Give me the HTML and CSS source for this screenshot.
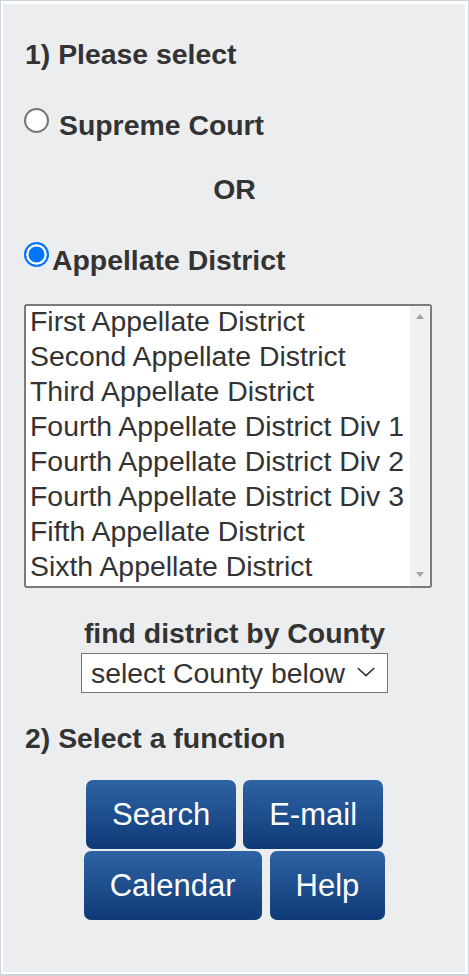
FILE: index.html
```html
<!DOCTYPE html>
<html lang="en">
<head>
<meta charset="utf-8">
<title>Select court</title>
<link rel="stylesheet" href="styles.css">
</head>
<body>
<div class="frame">
  <div class="panel">
    <p class="step">1) Please select</p>
    <div class="choice choice-supreme">
      <span class="radio"></span>
      <span>Supreme Court</span>
    </div>
    <p class="or">OR</p>
    <div class="choice choice-appellate">
      <span class="radio checked"></span>
      <span>Appellate District</span>
    </div>
    <div class="listbox">
      <div class="options">
        <div class="option">First Appellate District</div>
        <div class="option">Second Appellate District</div>
        <div class="option">Third Appellate District</div>
        <div class="option">Fourth Appellate District Div 1</div>
        <div class="option">Fourth Appellate District Div 2</div>
        <div class="option">Fourth Appellate District Div 3</div>
        <div class="option">Fifth Appellate District</div>
        <div class="option">Sixth Appellate District</div>
      </div>
      <div class="scrollbar">
        <span class="arrow-up"></span>
        <span class="arrow-down"></span>
      </div>
    </div>
    <p class="county-label">find district by County</p>
    <div class="county-select">
      <span>select County below</span>
      <svg class="chevron" width="18" height="10" viewBox="0 0 18 10"><polyline points="0.7,1 9,8.6 17.3,1" fill="none" stroke="#333" stroke-width="1.6"/></svg>
    </div>
    <p class="step step2">2) Select a function</p>
    <div class="buttons">
      <div class="btn-row">
        <span class="btn">Search</span>
        <span class="btn">E-mail</span>
      </div>
      <div class="btn-row btn-row-2">
        <span class="btn">Calendar</span>
        <span class="btn">Help</span>
      </div>
    </div>
  </div>
</div>
</body>
</html>
```
FILE: styles.css
```css
html, body {
  margin: 0;
  padding: 0;
}
body {
  width: 469px;
  height: 976px;
  font-family: "Liberation Sans", Arial, sans-serif;
  color: #333;
}
.frame {
  box-sizing: border-box;
  height: 976px;
  border: 1px solid #cdd3dd;
  border-bottom-width: 2px;
  padding: 3px 3px 2px 2px;
  background: #fff;
}
.panel {
  box-sizing: border-box;
  height: 100%;
  background: #ecedef;
  padding: 34px 21px 0 22px;
}
.step {
  margin: 0;
  font-size: 28.4px;
  font-weight: bold;
  line-height: 32px;
}
.choice {
  display: flex;
  align-items: flex-start;
  margin-top: 39px;
  margin-left: -1px;
  font-size: 28.4px;
  font-weight: bold;
  line-height: 32px;
}
.radio {
  flex: none;
  width: 25px;
  height: 25px;
  box-sizing: border-box;
  border: 2px solid #767676;
  border-radius: 50%;
  background: #fff;
}
.choice-supreme .radio {
  margin: -1px 10px 0 0;
}
.choice-appellate .radio {
  margin: -2px 3px 0 0;
}
.radio.checked {
  border-color: #0075ff;
  background: #0075ff;
  box-shadow: inset 0 0 0 2.5px #fff;
}
.or {
  margin: 32px 0 0;
  text-align: center;
  font-size: 28.4px;
  font-weight: bold;
  line-height: 32px;
}
.listbox {
  display: flex;
  box-sizing: border-box;
  width: 408px;
  height: 284px;
  margin-top: 28px;
  margin-left: -1px;
  border: 2px solid #7b7b7b;
  border-radius: 3px;
  background: #fff;
}
.options {
  flex: 1;
  padding-left: 4px;
  font-size: 28.4px;
  color: #333;
  overflow: hidden;
}
.option {
  line-height: 31px;
  padding-bottom: 4px;
  white-space: nowrap;
}
.scrollbar {
  flex: none;
  width: 20px;
  background: #f1f1f1;
  display: flex;
  flex-direction: column;
  justify-content: space-between;
  align-items: center;
  padding: 8px 0 9px;
  box-sizing: border-box;
}
.arrow-up {
  width: 0;
  height: 0;
  border-left: 4.5px solid transparent;
  border-right: 4.5px solid transparent;
  border-bottom: 5px solid #a3a3a3;
}
.arrow-down {
  width: 0;
  height: 0;
  border-left: 4.5px solid transparent;
  border-right: 4.5px solid transparent;
  border-top: 5px solid #a3a3a3;
}
.county-label {
  margin: 29px 0 0;
  text-align: center;
  font-size: 28.4px;
  font-weight: bold;
  line-height: 32px;
}
.county-select {
  display: flex;
  align-items: center;
  justify-content: space-between;
  box-sizing: border-box;
  width: 307px;
  height: 40px;
  margin: 4px auto 0;
  padding: 0 12px 0 9px;
  border: 1px solid #767676;
  background: #fff;
  font-size: 28.4px;
  line-height: 32px;
  color: #333;
}
.chevron {
  display: block;
  margin-top: -2px;
}
.step2 {
  margin-top: 29px;
}
.buttons {
  margin-top: 26px;
  display: flex;
  flex-direction: column;
  align-items: center;
  gap: 2px;
}
.btn-row {
  display: flex;
  gap: 7px;
}
.btn-row-2 {
  gap: 8px;
}
.btn {
  display: block;
  padding: 17px 26px 16px;
  font-size: 31px;
  line-height: 36px;
  color: #fff;
  border-radius: 7px;
  background: linear-gradient(to bottom, #2f63a4, #0e3a77);
}
```
